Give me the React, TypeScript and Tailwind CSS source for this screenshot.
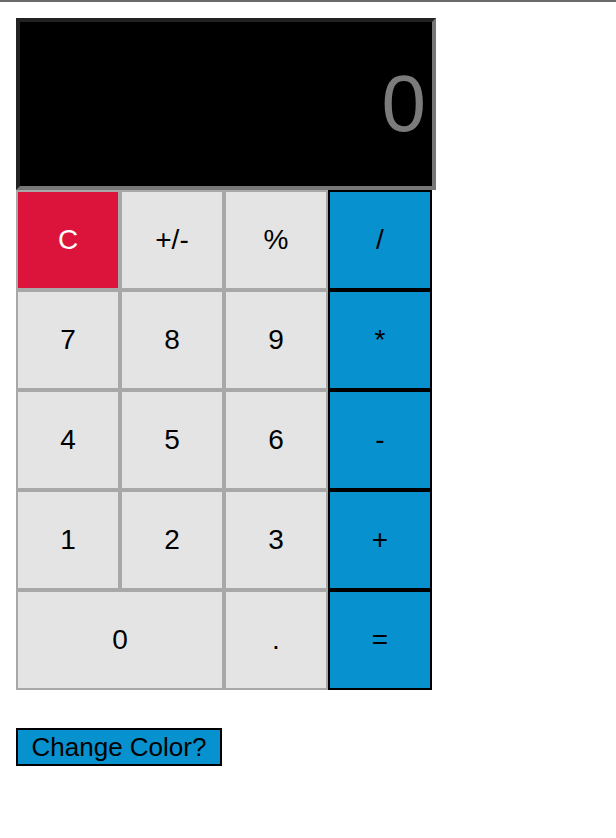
import React, { useState } from "react";

type Key = { label: string; kind: "clear" | "num" | "op"; wide?: boolean };

const keys: Key[] = [
  { label: "C", kind: "clear" },
  { label: "+/-", kind: "num" },
  { label: "%", kind: "num" },
  { label: "/", kind: "op" },
  { label: "7", kind: "num" },
  { label: "8", kind: "num" },
  { label: "9", kind: "num" },
  { label: "*", kind: "op" },
  { label: "4", kind: "num" },
  { label: "5", kind: "num" },
  { label: "6", kind: "num" },
  { label: "-", kind: "op" },
  { label: "1", kind: "num" },
  { label: "2", kind: "num" },
  { label: "3", kind: "num" },
  { label: "+", kind: "op" },
  { label: "0", kind: "num", wide: true },
  { label: ".", kind: "num" },
  { label: "=", kind: "op" },
];

const kindClass: Record<Key["kind"], string> = {
  clear: "bg-[#dc143c] text-white border-[#a8a8a8]",
  num: "bg-[#e4e4e4] text-black border-[#a8a8a8]",
  op: "bg-[#0891cf] text-black border-black",
};

export default function App() {
  const [display] = useState("0");

  return (
    <div className="min-h-[838px] bg-white font-['Liberation_Sans',Arial,sans-serif]">
      <div className="h-[2px] w-full bg-[#6a6a6a]" />

      <div className="ml-4 mt-4 w-[420px]">
        <div className="flex h-[172px] items-center justify-end border-4 border-t-[#222222] border-l-[#222222] border-b-[#777777] border-r-[#777777] bg-black pr-[6px]">
          <span className="text-[80px] leading-none text-[#7b7b7b]">{display}</span>
        </div>

        <div className="grid w-[416px] grid-cols-[repeat(4,104px)] grid-rows-[repeat(5,100px)]">
          {keys.map((k) => (
            <button
              key={k.label}
              className={`flex items-center justify-center border-2 text-[28px] leading-none ${kindClass[k.kind]} ${
                k.wide ? "col-span-2" : ""
              }`}
            >
              {k.label}
            </button>
          ))}
        </div>
      </div>

      <button className="ml-4 mt-[38px] h-[38px] w-[206px] border-2 border-black bg-[#0891cf] px-[12px] text-[26px] leading-none text-black">
        Change Color?
      </button>
    </div>
  );
}
